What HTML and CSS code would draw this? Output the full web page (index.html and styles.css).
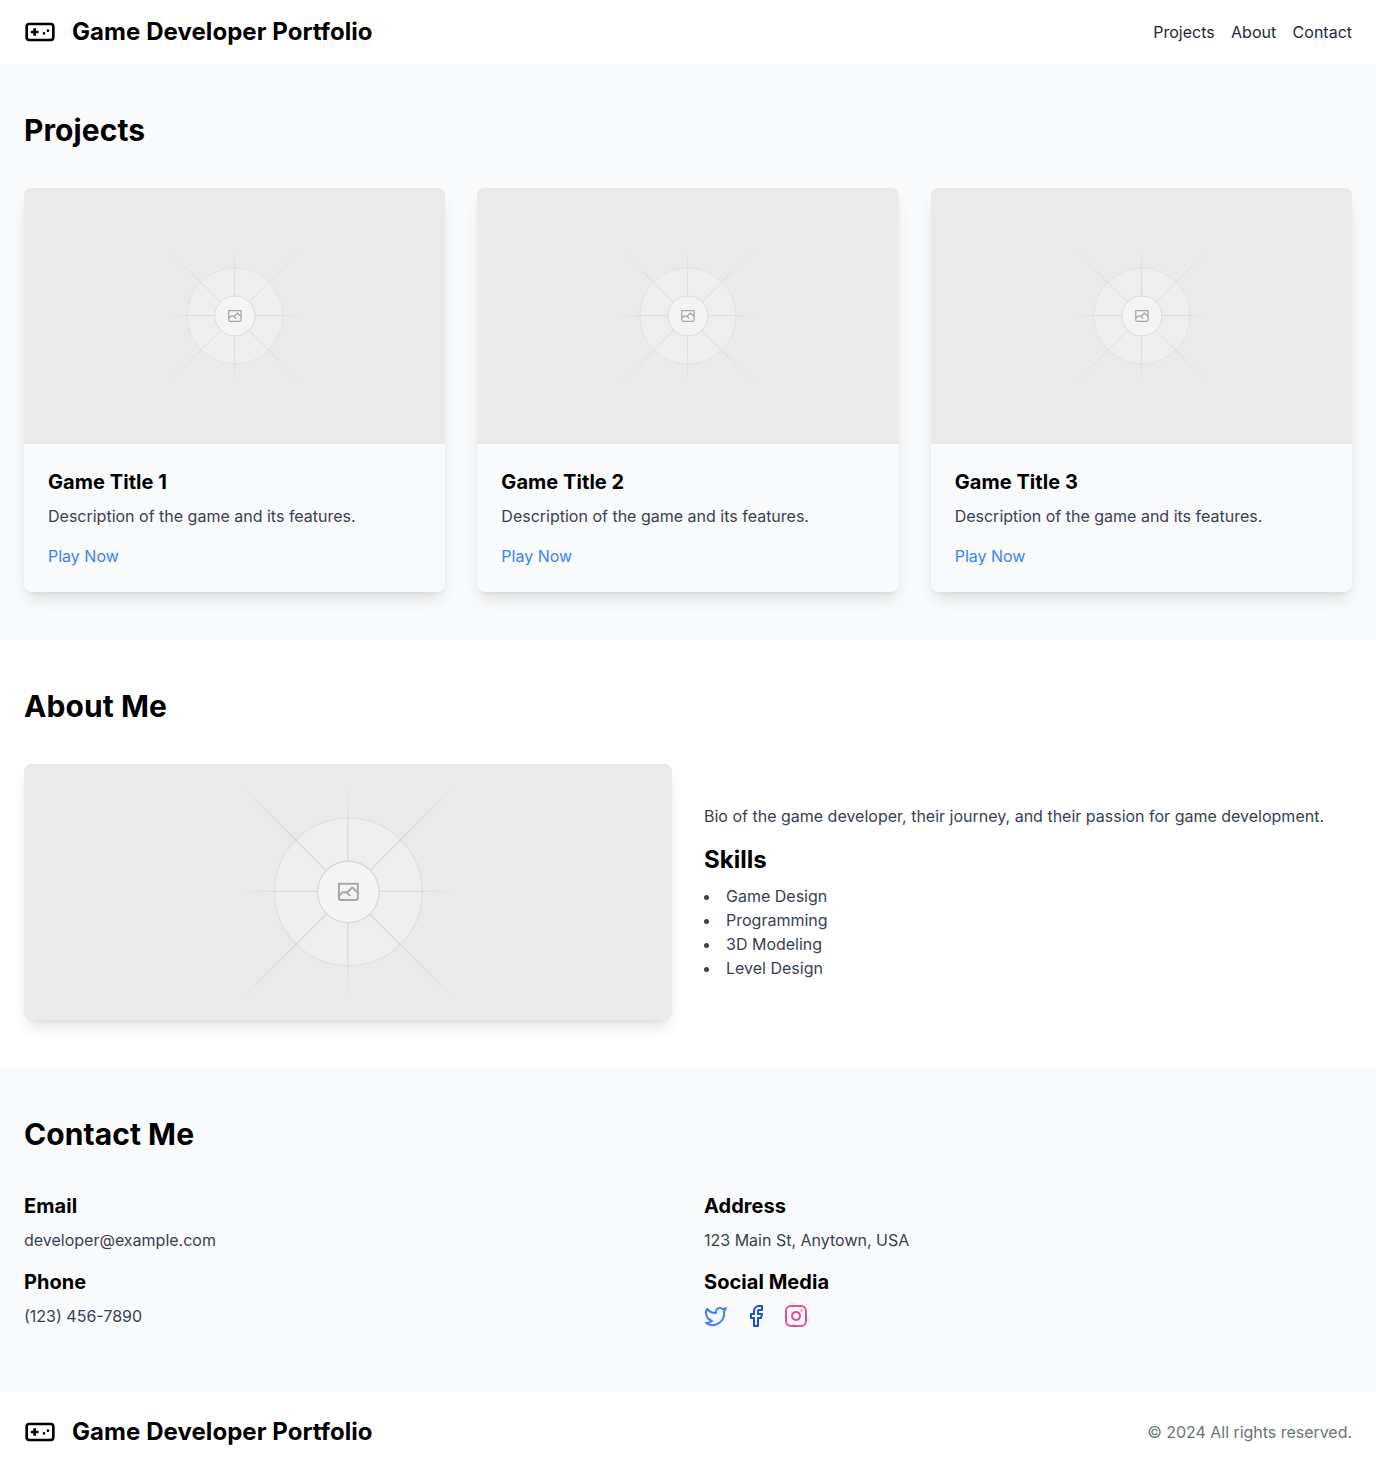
FILE: index.html
```html
<!DOCTYPE html>
<html lang="en">
<head>
<meta charset="utf-8">
<title>Game Developer Portfolio</title>
<link rel="stylesheet" href="styles.css">
</head>
<body>
<svg class="defs" aria-hidden="true">
  <defs>
    <linearGradient id="fade-up" gradientUnits="userSpaceOnUse" x1="404" y1="797" x2="796" y2="405"><stop stop-color="#C9C9C9" stop-opacity="0"/><stop offset=".208" stop-color="#C9C9C9"/><stop offset=".792" stop-color="#C9C9C9"/><stop offset="1" stop-color="#C9C9C9" stop-opacity="0"/></linearGradient>
    <linearGradient id="fade-h" gradientUnits="userSpaceOnUse" x1="404" y1="599" x2="797" y2="599"><stop stop-color="#C9C9C9" stop-opacity="0"/><stop offset=".208" stop-color="#C9C9C9"/><stop offset=".792" stop-color="#C9C9C9"/><stop offset="1" stop-color="#C9C9C9" stop-opacity="0"/></linearGradient>
    <linearGradient id="fade-v" gradientUnits="userSpaceOnUse" x1="600" y1="404" x2="600" y2="796"><stop stop-color="#C9C9C9" stop-opacity="0"/><stop offset=".208" stop-color="#C9C9C9"/><stop offset=".792" stop-color="#C9C9C9"/><stop offset="1" stop-color="#C9C9C9" stop-opacity="0"/></linearGradient>
    <linearGradient id="fade-down" gradientUnits="userSpaceOnUse" x1="404" y1="405" x2="796" y2="797"><stop stop-color="#C9C9C9" stop-opacity="0"/><stop offset=".208" stop-color="#C9C9C9"/><stop offset=".792" stop-color="#C9C9C9"/><stop offset="1" stop-color="#C9C9C9" stop-opacity="0"/></linearGradient>
  </defs>
  <symbol id="placeholder" viewBox="0 0 1200 1200" preserveAspectRatio="xMidYMid slice">
    <rect width="1200" height="1200" fill="#EAEAEA"/>
    <g opacity=".5" fill="none" stroke-width="2.418">
      <circle cx="600.709" cy="599.88" r="136.62" fill="#FAFAFA" stroke="#C9C9C9" opacity=".5"/>
      <path stroke="url(#fade-up)" d="M404.276 796.6 795.7 405.157"/>
      <path stroke="url(#fade-h)" d="M404.846 598.671h391.726"/>
      <path stroke="url(#fade-v)" d="M599.5 795.742V404.017"/>
      <path stroke="url(#fade-down)" d="m795.717 796.597-391.441-391.44"/>
      <circle cx="600.709" cy="599.88" r="56.825" fill="#fff" stroke="#C9C9C9"/>
      <path fill="#666" fill-rule="evenodd" d="M616.426 586.58h-31.434v16.176l3.553-3.554.531-.531h9.068l.074-.074 8.463-8.463h2.565l7.18 7.181V586.58Zm-15.715 14.654 3.698 3.699 1.283 1.282-2.565 2.565-1.282-1.283-5.2-5.199h-6.066l-5.514 5.514-.073.073v2.876a2.418 2.418 0 0 0 2.418 2.418h26.598a2.418 2.418 0 0 0 2.418-2.418v-8.317l-8.463-8.463-7.181 7.181-.071.072Zm-19.347 5.442v4.085a6.045 6.045 0 0 0 6.046 6.045h26.598a6.044 6.044 0 0 0 6.045-6.045v-7.108l1.356-1.355-1.282-1.283-.074-.073v-17.989h-38.689v23.43l-.146.146.146.147Z"/>
    </g>
  </symbol>
  <symbol id="gamepad" viewBox="0 0 24 24">
    <path d="M6 12h4M8 10v4M15 13h.01M18 11h.01"/><rect width="20" height="12" x="2" y="6" rx="2"/>
  </symbol>
</svg>

<header class="bar header">
  <div class="brand">
    <svg class="icon brand-icon"><use href="#gamepad"/></svg>
    <h1 class="brand-name">Game Developer Portfolio</h1>
  </div>
  <nav class="nav"><a href="#projects">Projects</a><a href="#about">About</a><a href="#contact">Contact</a></nav>
</header>

<main>
  <section id="projects" class="section tinted">
    <h2 class="section-title">Projects</h2>
    <div class="cards">
      <article class="card">
        <svg class="picture"><use href="#placeholder"/></svg>
        <div class="card-body">
          <h3 class="subtitle">Game Title 1</h3>
          <p class="text">Description of the game and its features.</p>
          <a class="play" href="#">Play Now</a>
        </div>
      </article>
      <article class="card">
        <svg class="picture"><use href="#placeholder"/></svg>
        <div class="card-body">
          <h3 class="subtitle">Game Title 2</h3>
          <p class="text">Description of the game and its features.</p>
          <a class="play" href="#">Play Now</a>
        </div>
      </article>
      <article class="card">
        <svg class="picture"><use href="#placeholder"/></svg>
        <div class="card-body">
          <h3 class="subtitle">Game Title 3</h3>
          <p class="text">Description of the game and its features.</p>
          <a class="play" href="#">Play Now</a>
        </div>
      </article>
    </div>
  </section>

  <section id="about" class="section">
    <h2 class="section-title">About Me</h2>
    <div class="columns centered">
      <div class="portrait"><svg class="picture"><use href="#placeholder"/></svg></div>
      <div>
        <p class="text">Bio of the game developer, their journey, and their passion for game development.</p>
        <h3 class="skills-title">Skills</h3>
        <ul class="skills">
          <li>Game Design</li>
          <li>Programming</li>
          <li>3D Modeling</li>
          <li>Level Design</li>
        </ul>
      </div>
    </div>
  </section>

  <section id="contact" class="section tinted">
    <h2 class="section-title">Contact Me</h2>
    <div class="columns">
      <div>
        <h3 class="subtitle">Email</h3>
        <p class="text">developer@example.com</p>
        <h3 class="subtitle">Phone</h3>
        <p class="text">(123) 456-7890</p>
      </div>
      <div>
        <h3 class="subtitle">Address</h3>
        <p class="text">123 Main St, Anytown, USA</p>
        <h3 class="subtitle">Social Media</h3>
        <div class="social">
          <svg class="icon twitter" viewBox="0 0 24 24"><path d="M22 4s-.7 2.1-2 3.4c1.6 10-9.4 17.3-18 11.6 2.2.1 4.4-.6 6-2C3 15.5.5 9.6 3 5c2.2 2.6 5.6 4.1 9 4-.9-4.2 4-6.6 7-3.8 1.1 0 3-1.2 3-1.2z"/></svg>
          <svg class="icon facebook" viewBox="0 0 24 24"><path d="M18 2h-3a5 5 0 0 0-5 5v3H7v4h3v8h4v-8h3l1-4h-4V7a1 1 0 0 1 1-1h3z"/></svg>
          <svg class="icon instagram" viewBox="0 0 24 24"><rect width="20" height="20" x="2" y="2" rx="5"/><path d="M16 11.37A4 4 0 1 1 12.63 8 4 4 0 0 1 16 11.37zM17.5 6.5h.01"/></svg>
        </div>
      </div>
    </div>
  </section>
</main>

<footer class="bar footer">
  <div class="brand">
    <svg class="icon brand-icon"><use href="#gamepad"/></svg>
    <span class="brand-name">Game Developer Portfolio</span>
  </div>
  <p class="copyright">© 2024 All rights reserved.</p>
</footer>
</body>
</html>
```
FILE: styles.css
```css
* { box-sizing: border-box; margin: 0; padding: 0; }
body { background: #fff; color: #000; font: 16px/24px Inter, "Liberation Sans", sans-serif; }
a { color: inherit; text-decoration: none; }
svg { display: block; }
.defs { position: absolute; width: 0; height: 0; }
.icon { width: 24px; height: 24px; fill: none; stroke: currentColor; stroke-width: 2; stroke-linecap: round; stroke-linejoin: round; }

.bar { display: flex; align-items: center; justify-content: space-between; }
.header { padding: 16px 24px; }
.footer { padding: 24px; }
.brand { display: flex; align-items: center; gap: 16px; }
.brand-icon { width: 32px; height: 32px; }
.brand-name { font-size: 24px; line-height: 32px; font-weight: 700; letter-spacing: .06px; }
.nav { display: flex; gap: 16.4px; color: #1f2937; }
.copyright { color: #6b7280; letter-spacing: -.03px; }

.section { padding: 48px 24px; }
.tinted { background: #f9fafb; }
.section-title { font-size: 30px; line-height: 36px; font-weight: 700; letter-spacing: .07px; margin-bottom: 40px; }
.subtitle { font-size: 20px; line-height: 28px; font-weight: 700; letter-spacing: .05px; margin-bottom: 8px; }
.text { color: #374151; margin-bottom: 16px; }

.cards { display: grid; grid-template-columns: repeat(3, 1fr); gap: 32px; }
.card, .portrait { border-radius: 8px; overflow: hidden; box-shadow: 0 10px 15px -3px rgb(0 0 0 / .1), 0 4px 6px -4px rgb(0 0 0 / .1); }
.card { background: #f9fafb; }
.card-body { padding: 24px; }
.picture { width: 100%; height: 256px; background: #eaeaea; }
.play { display: block; color: #3b82f6; }

.columns { display: grid; grid-template-columns: 1fr 1fr; gap: 32px; }
.centered { align-items: center; }
.skills-title { font-size: 24px; line-height: 32px; font-weight: 700; margin-bottom: 8px; }
.skills { list-style: disc inside; color: #374151; }

.social { display: flex; gap: 16px; }
.twitter { color: #3b82f6; }
.facebook { color: #1d4ed8; }
.instagram { color: #ec4899; }
```
